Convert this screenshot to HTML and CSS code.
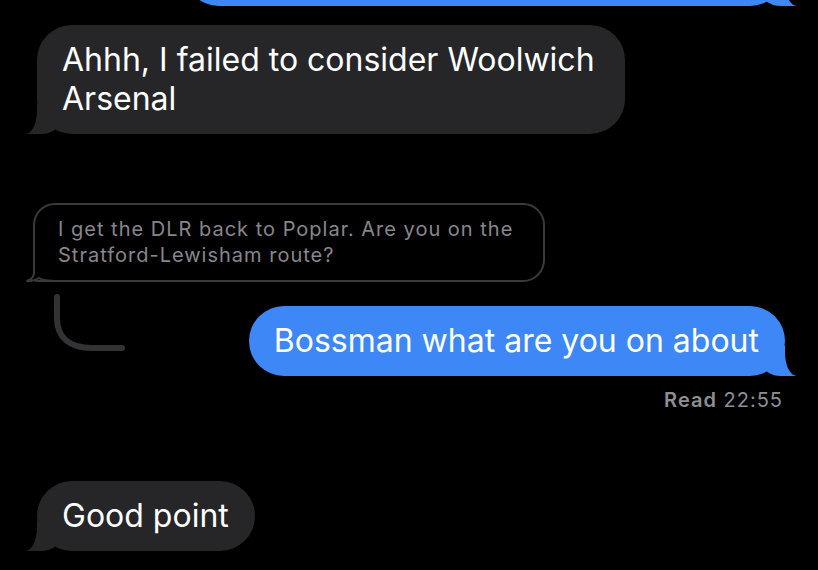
FILE: index.html
```html
<!DOCTYPE html>
<html lang="en">
<head>
<meta charset="utf-8">
<title>Messages</title>
<link rel="stylesheet" href="styles.css">
</head>
<body>
<div class="thread">
  <div class="bubble sent top-cut"></div>

  <div class="bubble received wide">Ahhh, I failed to consider Woolwich Arsenal</div>

  <div class="quote">
    <div class="quote-bubble">I get the DLR back to Poplar. Are you on the Stratford-Lewisham route?
      <svg class="quote-tail" width="44" height="32" viewBox="0 0 44 32">
        <path d="M11,0 L11,22 C11,26 8,28.5 3.5,30 C9,30.6 13,29 16,27 C20,29.5 26,30 44,30" fill="#000" stroke="#3a3a3c" stroke-width="2"/>
      </svg>
    </div>
  </div>

  <div class="reply-row">
    <svg class="connector" width="80" height="64" viewBox="0 0 80 64">
      <path d="M5,3 L5,24 C5,44 18,54 40,54 L70,54" fill="none" stroke="#333335" stroke-width="6" stroke-linecap="round"/>
    </svg>
    <div class="bubble sent">Bossman what are you on about</div>
  </div>

  <div class="receipt"><b>Read</b> 22:55</div>

  <div class="bubble received short">Good point</div>
</div>
</body>
</html>
```

FILE: styles.css
```css
html, body {
  margin: 0;
  padding: 0;
  background: #000;
}

body {
  width: 818px;
  height: 570px;
  overflow: hidden;
  font-family: "Inter", "Roboto", "Noto Sans", sans-serif;
}

.thread {
  display: flex;
  flex-direction: column;
}

.bubble {
  position: relative;
  box-sizing: border-box;
  font-size: 32px;
  line-height: 39px;
  padding: 15px 26px 16px 25px;
  border-radius: 35px;
  color: #fff;
  width: fit-content;
}

.bubble.received {
  background: #262629;
  margin-left: 37px;
  align-self: flex-start;
}

.bubble.sent {
  background: #3e87f6;
  margin-right: 33px;
  align-self: flex-end;
}

.bubble.received::before {
  content: "";
  position: absolute;
  bottom: 0;
  left: -12px;
  width: 34px;
  height: 30px;
  background: #262629;
  border-bottom-right-radius: 18px 12px;
}

.bubble.received::after {
  content: "";
  position: absolute;
  bottom: 0;
  left: -30px;
  width: 30px;
  height: 30px;
  background: #000;
  border-bottom-right-radius: 12px 23px;
}

.bubble.sent::before {
  content: "";
  position: absolute;
  bottom: 0;
  right: -12px;
  width: 34px;
  height: 30px;
  background: #3e87f6;
  border-bottom-left-radius: 18px 12px;
}

.bubble.sent::after {
  content: "";
  position: absolute;
  bottom: 0;
  right: -30px;
  width: 30px;
  height: 30px;
  background: #000;
  border-bottom-left-radius: 12px 23px;
}

.top-cut {
  width: 601px;
  height: 70px;
  margin-top: -64px;
  margin-right: 37px;
}

.wide {
  margin-top: 19px;
  max-width: 588px;
  padding-right: 30px;
}

.quote {
  margin-top: 69px;
  margin-left: 33px;
}

.quote-bubble {
  position: relative;
  box-sizing: border-box;
  width: 512px;
  border: 2px solid #3a3a3c;
  border-radius: 22px;
  border-bottom-left-radius: 4px;
  padding: 11px 16px 12px 23px;
  font-size: 20px;
  line-height: 26px;
  letter-spacing: 1px;
  color: #87878b;
}

.quote-tail {
  position: absolute;
  left: -12px;
  bottom: -3px;
  display: block;
}

.reply-row {
  display: flex;
  align-items: flex-start;
  margin-top: 24px;
}

.connector {
  display: block;
  margin-top: -12px;
  margin-left: 52px;
  flex: none;
}

.reply-row .bubble.sent {
  margin-left: auto;
}

.receipt {
  align-self: flex-end;
  margin-right: 35px;
  margin-top: 13px;
  font-size: 20px;
  line-height: 23px;
  letter-spacing: 1px;
  color: #8e8e93;
}

.receipt b {
  font-weight: 600;
}

.short {
  margin-top: 69px;
}
```
